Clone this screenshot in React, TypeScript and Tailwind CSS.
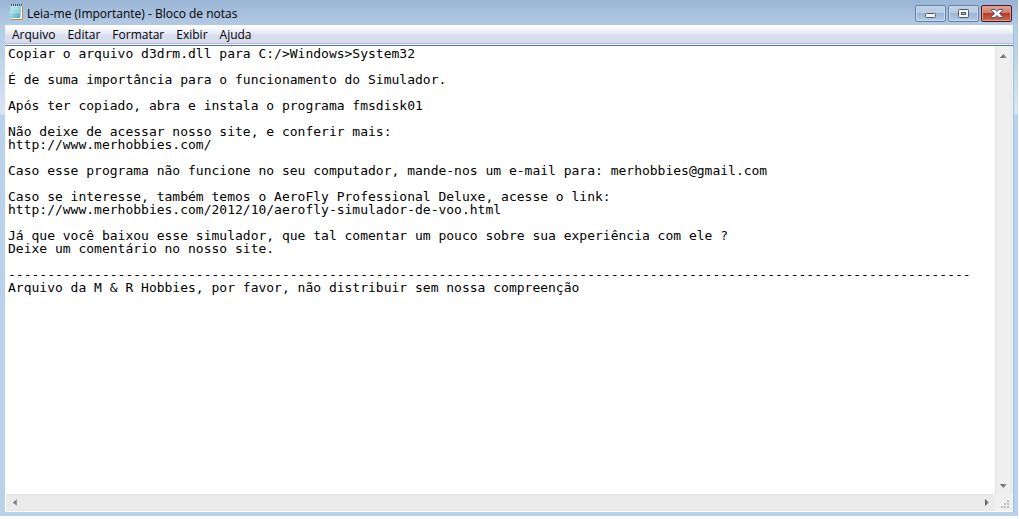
import { useState } from "react";

const initialText = `Copiar o arquivo d3drm.dll para C:/>Windows>System32

É de suma importância para o funcionamento do Simulador.

Após ter copiado, abra e instala o programa fmsdisk01

Não deixe de acessar nosso site, e conferir mais:
http://www.merhobbies.com/

Caso esse programa não funcione no seu computador, mande-nos um e-mail para: merhobbies@gmail.com

Caso se interesse, também temos o AeroFly Professional Deluxe, acesse o link:
http://www.merhobbies.com/2012/10/aerofly-simulador-de-voo.html

Já que você baixou esse simulador, que tal comentar um pouco sobre sua experiência com ele ?
Deixe um comentário no nosso site.

${"-".repeat(123)}
Arquivo da M & R Hobbies, por favor, não distribuir sem nossa compreenção`;

const menus = ["Arquivo", "Editar", "Formatar", "Exibir", "Ajuda"];

function NotepadIcon() {
  return (
    <svg width="16" height="17" viewBox="0 0 16 17" aria-hidden="true">
      <defs>
        <linearGradient id="page" x1="0" y1="0" x2="1" y2="1">
          <stop offset="0" stopColor="#d3f0f2" />
          <stop offset="0.5" stopColor="#9bd3e0" />
          <stop offset="1" stopColor="#3fa0b2" />
        </linearGradient>
      </defs>
      <path d="M4 1h10.500v14.500H3z" fill="#fbf8ec" />
      <path d="M14.500 2v13.500H3" fill="none" stroke="#a98d57" />
      <path d="M3 1h10.500l-1.500 13H0.500z" fill="url(#page)" />
      <path d="M3 4.500h9.500M3 6.500h9M2 8.500h10" stroke="#b7e0e8" strokeOpacity="0.7" />
      <path d="M3 1h11" stroke="#45565e" strokeWidth="2" strokeDasharray="1 1" />
    </svg>
  );
}

function MinimizeIcon() {
  return (
    <svg width="11" height="5" viewBox="0 0 11 5" aria-hidden="true">
      <rect x="0.500" y="0.500" width="10" height="4" rx="1" fill="#f6f6f4" stroke="#535666" />
    </svg>
  );
}

function MaximizeIcon() {
  return (
    <svg width="11" height="9" viewBox="0 0 11 9" aria-hidden="true">
      <rect x="0.500" y="0.500" width="10" height="8" rx="1" fill="#f8f8f7" stroke="#535666" />
      <rect x="3.500" y="3.500" width="4" height="2" fill="#a5bfda" stroke="#535666" />
    </svg>
  );
}

function CloseIcon() {
  return (
    <svg width="12" height="9" viewBox="0 0 12 9" aria-hidden="true">
      <path
        d="M0.500 0.500H4L6 2.500 8 0.500h3.500v1L8.500 4.500l3 3v1H8L6 6.500 4 8.500H0.500v-1l3-3-3-3z"
        fill="#fff"
        stroke="#535666"
      />
    </svg>
  );
}

function Arrow({ points, width, height }: { points: string; width: number; height: number }) {
  return (
    <svg width={width} height={height} viewBox={`0 0 ${width} ${height}`} aria-hidden="true">
      <defs>
        <linearGradient id="arrow" x1="0" y1="0" x2="1" y2="0">
          <stop offset="0" stopColor="#505050" />
          <stop offset="1" stopColor="#a6a6a6" />
        </linearGradient>
      </defs>
      <polygon points={points} fill="url(#arrow)" />
    </svg>
  );
}

const frameButton =
  "flex h-[17px] w-[31px] items-center justify-center rounded-[2px] border border-[#6580a3] bg-linear-to-b from-[#b9cee5] from-50% via-[#9ab6d5] via-50% to-[#b3cde6] shadow-[inset_0_0_0_1px_#c9dcef]";

export default function App() {
  const [text, setText] = useState(initialText);

  return (
    <div className="flex h-screen flex-col bg-white pr-px pb-[3px] font-['Open_Sans','Noto_Sans',sans-serif] text-black">
      <div className="flex min-h-0 flex-1 flex-col bg-[linear-gradient(to_bottom,#9ab5d5_0,#b5cce6_28px,#bbd0e8_50px,#d9e6f4_114px,#b9d1ea_115px)] px-[5px] pb-1">
        <header className="flex h-[25px] shrink-0 items-center justify-between pr-px pl-[3px]">
          <div className="flex items-center gap-[3px]">
            <NotepadIcon />
            <h1 className="pt-0.5 text-[12px] leading-4 whitespace-nowrap">Leia-me (Importante) - Bloco de notas</h1>
          </div>
          <div className="flex gap-0.5 pt-0.5">
            <button type="button" aria-label="Minimizar" className={`${frameButton} pt-1`}>
              <MinimizeIcon />
            </button>
            <button type="button" aria-label="Maximizar" className={frameButton}>
              <MaximizeIcon />
            </button>
            <button
              type="button"
              aria-label="Fechar"
              className="flex h-[17px] w-[31px] items-center justify-center rounded-[2px] border border-[#4c1420] bg-[linear-gradient(to_bottom,#e0a597_0%,#cf7868_48%,#b93c26_50%,#cb6a50_100%)] shadow-[inset_0_0_0_1px_#dfa195]"
            >
              <CloseIcon />
            </button>
          </div>
        </header>

        <main className="flex min-h-0 flex-1 flex-col bg-white shadow-[1px_0_0_0_#8cc5e8]">
          <nav
            aria-label="Menu"
            className="flex h-[19px] shrink-0 items-center border-b border-[#b5b9c9] bg-linear-to-b from-white from-10% via-[#e6eaf5] via-45% to-[#d7dcee] to-60% pt-0.5 pl-px"
          >
            {menus.map((name) => (
              <button key={name} type="button" className="px-[6px] text-[12px] leading-4">
                {name}
              </button>
            ))}
          </nav>

          <div className="mt-px grid min-h-0 flex-1 grid-cols-[minmax(0,1fr)_17px] grid-rows-[minmax(0,1fr)_17px] border-t border-[#4679ac] pr-px pb-px pl-px">
            <textarea
              aria-label="Texto do documento"
              value={text}
              onChange={(event) => setText(event.target.value)}
              spellCheck={false}
              wrap="off"
              className="resize-none overflow-hidden bg-white px-0.5 pt-px font-['DejaVu_Sans_Mono','Liberation_Mono',monospace] text-[13px] leading-[13px] outline-none"
            />
            <div className="flex flex-col justify-between border-x border-[#e3e3e3] bg-[#efefef]">
              <button type="button" aria-label="Rolar para cima" className="flex h-[19px] items-center justify-center">
                <Arrow points="0,4 3.5,0 7,4" width={7} height={4} />
              </button>
              <button type="button" aria-label="Rolar para baixo" className="flex h-[17px] items-center justify-center">
                <Arrow points="0,0 7,0 3.5,4" width={7} height={4} />
              </button>
            </div>
            <div className="flex justify-between border-y border-[#e3e3e3] bg-[#ebebeb]">
              <button type="button" aria-label="Rolar para a esquerda" className="flex w-[17px] items-center justify-center">
                <Arrow points="4,0 4,7 0,3.5" width={4} height={7} />
              </button>
              <button type="button" aria-label="Rolar para a direita" className="flex w-[17px] items-center justify-center">
                <Arrow points="0,0 4,3.5 0,7" width={4} height={7} />
              </button>
            </div>
            <div className="flex items-end justify-end bg-[#f0f0f0] p-0.5">
              <svg width="9" height="9" viewBox="0 0 9 9" fill="#bdbdbd" aria-hidden="true">
                <path d="M6 0h2v2H6zM3 3h2v2H3zM6 3h2v2H6zM0 6h2v2H0zM3 6h2v2H3zM6 6h2v2H6z" />
              </svg>
            </div>
          </div>
        </main>
      </div>
    </div>
  );
}
